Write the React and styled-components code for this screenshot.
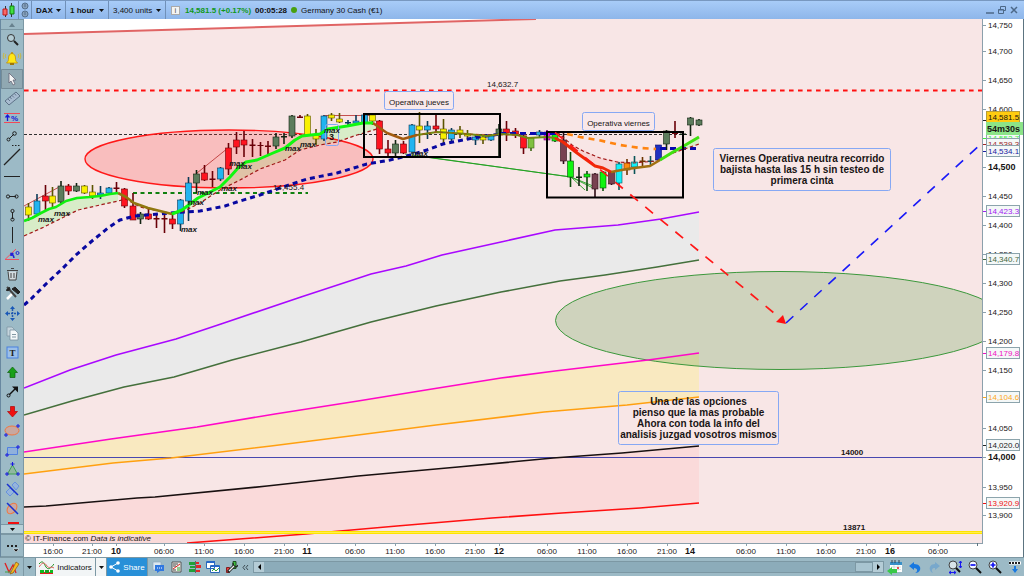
import styled, { createGlobalStyle } from "styled-components"

const GlobalStyle = createGlobalStyle`
* { box-sizing: border-box; }
body {
  margin: 0;
  background: #9dbac5;
  font-family: "Liberation Sans", Arial, sans-serif;
  font-size: 8px;
  color: #111;
}
button, select, input { font: inherit; color: inherit; margin: 0; padding: 0; border: none; background: none; }
svg { display: block; }
`

// x, high, body top, body bottom, low, colour key
const candles = [
    [28.5, 203, 207, 215, 221, "y"], [37, 194, 201, 214, 215, "b"], [45.5, 185, 196, 201, 210, "r"],
    [52.5, 187, 196, 203, 208, "y"], [61, 181, 186, 202, 204, "g"], [68.5, 184, 186, 191, 195, "r"],
    [76.5, 183, 186, 191, 192, "g"], [84.5, 185, 186, 193, 194, "y"], [92.5, 185, 192, 196, 199, "y"],
    [100.5, 186, 193, 195, 199, "b"], [109, 187, 188, 193, 194, "b"], [116.5, 182, 187.5, 189, 192, "r"],
    [124.5, 188, 189, 206, 208, "r"], [133, 193, 206, 220, 220, "r"], [140.5, 212, 214, 219, 224, "g"],
    [148.5, 209, 214, 219, 220, "r"], [156.5, 214, 218, 219.5, 228, "r"], [164.5, 214, 218, 219.5, 233, "r"],
    [172.5, 212, 219, 224, 229, "r"], [180.5, 199, 200, 224, 231, "b"], [188.5, 177, 183, 201, 221, "b"],
    [196.5, 170, 174, 183, 193, "g"], [204.5, 165, 173, 180, 181, "r"], [212.5, 171, 178.5, 180, 187, "r"],
    [220.5, 167, 168, 179, 181, "b"], [228.5, 143, 148, 169, 175, "r"], [236.5, 132, 140, 147, 154, "r"],
    [244, 131, 140, 145, 157, "r"], [252.5, 139, 144.5, 146, 157, "r"], [260.5, 142, 145, 146, 156, "r"],
    [268, 141, 145.5, 147, 156, "r"], [276, 133, 137, 146, 149, "g"], [284, 133, 136, 137.5, 144, "g"],
    [292, 115, 116, 136, 138, "g"], [300, 115, 116.5, 118, 118, "r"], [307.5, 114, 116, 135, 135, "y"],
    [316, 129, 135, 139, 145, "y"], [324, 115, 116, 139, 141, "b"], [331.5, 113, 115, 118, 121, "y"],
    [339.5, 113, 119, 122, 123, "y"], [348, 120, 122, 123.5, 125, "b"], [356, 115, 121, 123, 124, "b"],
    [364.5, 114, 115, 123, 124, "b"], [372.5, 114, 115, 121, 125, "y"], [379.5, 120, 121, 149, 154, "r"],
    [388, 140, 149, 153, 157, "r"], [395.5, 140, 144, 153, 156, "g"], [403.5, 141, 144, 153, 154, "r"],
    [412, 124, 125, 152, 154, "b"], [419.5, 112, 126, 130, 143, "y"], [427.5, 121, 126, 130, 139, "b"],
    [436, 114, 126, 129, 133, "r"], [443.5, 119, 129, 139, 143, "y"], [451.5, 128, 130, 139, 141, "b"],
    [460, 126, 130, 134, 138, "y"], [467.5, 130, 134, 136, 140, "y"], [475.5, 134, 137, 140, 145, "b"],
    [483, 135, 137, 140, 144, "y"], [491, 134, 136, 140, 141, "b"], [499, 124, 129, 134, 158, "g"],
    [506.5, 121, 129, 133, 141, "r"], [515.5, 128, 131, 134, 138, "r"], [523.5, 135, 136, 148, 154, "r"],
    [531, 137, 138, 148, 151, "o"], [539.5, 130, 132, 135, 137, "b"], [547, 130, 132, 140, 141, "p"],
    [555, 131, 133, 141, 142, "l"], [563.5, 133, 140, 161, 164, "m"], [570.5, 152, 161, 177, 187, "l"],
    [579, 167, 176.5, 178, 186, "g"], [587, 171, 174, 177, 191, "l"], [595, 173, 174, 189, 197, "m"],
    [603, 171, 172, 188, 191, "l"], [611.5, 171, 172, 184, 185, "m"], [619, 162, 164, 183, 190, "c"],
    [627, 159, 163, 170, 175, "a"], [634.5, 156, 162, 167, 174, "c"], [642.5, 157, 160.5, 162, 166, "a"],
    [650.5, 156, 160.5, 162, 165, "c"], [658.5, 145, 145, 160, 160, "n"], [666.5, 130, 131, 144, 150, "g"],
    [675, 121, 132.5, 134, 138, "r"], [683, 131, 133.5, 135, 136, "g"], [690.5, 117, 118, 125, 136, "g"],
    [699, 119, 120, 125, 126, "g"],
]

const candleColors = {
    y: ["#f8f000", "#5c5400"],
    b: ["#22b4f0", "#0a3a58"],
    r: ["#ff1420", "#6a0008"],
    g: ["#5c7c5c", "#122412"],
    o: ["#80c040", "#3c6414"],
    p: ["#e010e0", "#780078"],
    l: ["#10f410", "#0a4c0a"],
    m: ["#784050", "#2c0c14"],
    c: ["#10f0f8", "#0a5458"],
    a: ["#ff8c10", "#6c3400"],
    n: ["#2030c0", "#080870"],
}

const purple = "24,388 70,370 116,355 176,339 221,324 301,297 371,274 406,266 442,255 501,242 555,230 618,225 661,219 699,212"
const darkGreen = "24,415 72,401 124,387 174,377 232,360 301,342 371,322 436,306 501,292 560,281 605,275 657,267 699,260"
const magenta = "24,452 111,439 197,427 275,414 358,401 432,389 501,378 555,371 648,360 699,353"
const orange = "24,474 113,463 171,458 271,446 358,435 436,425 544,412 627,405 699,397"
const black = "24,507 46,506 137,498 155,497 267,486 358,476 458,467 553,458 622,453 699,446"
const red = "187,543 306,534 397,526 492,518 562,513 640,508 699,503"

const maGreen1 = "24,221 32,218 41,213 49,209 56,207 66,201 77,198 90,197 100,196 110,194 118,193"
const maOlive1 = "118,193 126,197 134,203 148,208 160,211 172,214"
const maGreen2 = "172,214 182,210 190,204 198,198 208,193 220,187 230,177 238,168 246,162 257,160 273,153 285,148 295,140 302,136 320,134 328,129 347,126 363,123 373,123"
const maOlive2 = "373,123 387,133 403,139 417,135"
const maOlive3 = "417,135 437,132 453,133 467,134 487,136 500,134 517,135 528,138 547,137 555,138"
const maRed = "555,138 563,142 577,153 595,166 603,168 611,172"
const maOlive4 = "611,172 627,169 650,166 660,160"
const maGreen3 = "660,160 673,152 682,147 699,137"

const band1 = "24,236 44,227 60,219 78,210 100,205 118,201"
const band2 = "172,214 182,212 200,203 220,190 240,180 260,169 285,160 300,150 320,145 337,142 357,135 377,129"

const reverse = (points) => points.split(" ").reverse().join(" ")

const highs = [
    [38, 222], [54, 216], [181, 232], [188, 205], [197, 195], [221, 191], [229, 166],
    [236, 169], [285, 151], [300, 147], [324, 133], [412, 156],
]

const prices = [
    [25, "14,750"], [51, "14,700"], [80, "14,650"], [109, "14,600"], [167, "14,500", true],
    [196, "14,450"], [225, "14,400"], [254, "14,350"], [283, "14,300"], [312, "14,250"],
    [341, "14,200"], [370, "14,150"], [428, "14,050"], [457, "14,000", true], [487, "13,950"], [515, "13,900"],
]

const tags = [
    [138, "14,552.7", "#3cf03c"], [144, "14,539.3", "#a02828"], [151, "14,534.1", "#2020a0"],
    [211, "14,423.3", "#a020f0"], [259, "14,340.7", "#44683c"], [353, "14,179.8", "#f010c0"],
    [397, "14,104.6", "#ffa818"], [445, "14,020.0", "#222"], [503, "13,920.9", "#f01010"],
]

const times = [
    [53, "16:00"], [92, "21:00"], [116, "10", true], [164, "06:00"], [204, "11:00"], [244, "16:00"],
    [284, "21:00"], [307, "11", true], [355, "06:00"], [395, "11:00"], [435, "16:00"], [475, "21:00"],
    [499, "12", true], [547, "06:00"], [587, "11:00"], [627, "16:00"], [667, "21:00"], [690, "14", true],
    [746, "06:00"], [786, "11:00"], [826, "16:00"], [866, "21:00"], [890, "16", true], [938, "06:00"],
]

const Note = ({ x, y, width, height, lines, big }) => (
    <g>
        <rect x={x} y={y} width={width} height={height} rx="2" fill={big ? "none" : "#f8e8ea"} stroke="#86a8f4" />
        <ChartText $bold={big} $size={big ? 10 : 8} textAnchor="middle">
            {lines.map((line, i) => (
                <tspan key={line} x={x + width / 2} y={y + 13 + i * 11}>{line}</tspan>
            ))}
        </ChartText>
    </g>
)

const Candle = ({ data }) => {
    const [x, high, top, bottom, low, key] = data
    const [fill, edge] = candleColors[key]
    const thin = bottom - top < 2
    return (
        <g>
            <line x1={x} x2={x} y1={high} y2={low} stroke={edge} strokeWidth="1.6" />
            <rect x={x - 3} y={top} width="6" height={bottom - top} fill={thin ? edge : fill} stroke={edge} strokeWidth={thin ? 0 : 0.6} />
        </g>
    )
}

const PriceChart = () => (
    <ChartSvg viewBox="24 19 1000 538" role="img" aria-label="Germany 30 Cash, 1 hour">
        <defs>
            <clipPath id="plot"><rect x="24" y="19" width="959" height="524" /></clipPath>
        </defs>
        <rect x="24" y="19" width="1000" height="538" fill="#fff" />
        <g clipPath="url(#plot)" fill="none">
            <polygon points="24,34 536,19 983,19 983,543 24,543" fill="#f8e6e6" />
            <line x1="24" y1="34" x2="536" y2="19" stroke="#e06464" strokeWidth="2" />

            <polygon points={`${purple} ${reverse(darkGreen)}`} fill="#eaeaea" />
            <polygon points={`${magenta} ${reverse(orange)}`} fill="#f9e9c0" />
            <polygon points={`${black} ${reverse(red)} 24,543`} fill="#fadada" />
            <ellipse cx="780" cy="320.5" rx="224.5" ry="49" fill="rgba(80,150,60,.24)" stroke="#3c983c" />

            <line x1="24" x2="983" y1="457.5" y2="457.5" stroke="#4848b0" />
            <polyline points={purple} stroke="#a808ff" strokeWidth="1.6" />
            <polyline points={darkGreen} stroke="#44703c" strokeWidth="1.6" />
            <polyline points={magenta} stroke="#ff08c8" strokeWidth="1.7" />
            <polyline points={orange} stroke="#ffa010" strokeWidth="1.6" />
            <polyline points={black} stroke="#181010" strokeWidth="1.7" />
            <polyline points={red} stroke="#ff1010" strokeWidth="1.6" />
            <line x1="24" x2="983" y1="532.5" y2="532.5" stroke="#ffe400" strokeWidth="3" />
            <line x1="24" x2="983" y1="532.5" y2="532.5" stroke="#ffee50" />

            <line x1="24" x2="983" y1="90.5" y2="90.5" stroke="#ff1010" strokeWidth="2" strokeDasharray="4.6 4.4" />
            <line x1="24" x2="688" y1="134.5" y2="134.5" stroke="#303030" strokeDasharray="3 2" />
            <line x1="133" x2="308" y1="193" y2="193" stroke="#108010" strokeWidth="2" strokeDasharray="4 3.5" />

            <polygon points={`${maGreen1} ${reverse(band1)}`} fill="#d8ecc8" />
            <polygon points={`${maGreen2} ${reverse(band2)}`} fill="#d8ecc8" />
            <polygon points="555,132 572,145 600,158 633,163 611,172 595,166 577,153" fill="#f8d4d4" />
            <polygon points="660,160 673,152 699,137 699,144 680,151" fill="#d8ecc8" />
            <ellipse cx="229" cy="159" rx="144" ry="29" fill="rgba(255,50,50,.22)" stroke="#ff1818" strokeWidth="1.4" />

            <path d="M24 206 61 186M197 173l31-25M325 115.5h48" stroke="#b82828" strokeWidth=".8" />
            <path d="M405 154 571 177 595 189M425 157l146 20 14 13M571 177l22 9" stroke="#20a020" strokeWidth=".9" />

            {candles.map((candle) => <Candle key={candle[0]} data={candle} />)}

            <polyline points="24,305 31,299 47,283 62,269 77,254 92,241 108,228 120,220 135,216 170,213 200,211 225,206 240,201 260,195 283,187 307,179 337,173 367,164 390,160 407,156 427,150 443,144 473,138 500,134" stroke="#0808a0" strokeWidth="3" strokeDasharray="5 4" />
            <path d="M500 133.5h56M660 148.5h39" stroke="#0808b0" strokeWidth="3" strokeDasharray="6 4" />
            <polyline points="567,134 580,137 598,140 620,145 640,148 656,149" stroke="#ff8410" strokeWidth="2.6" strokeDasharray="6 5" />

            <g stroke="#a01818" strokeWidth="1.2" strokeDasharray="3.5 2.5">
                <polyline points={`${band1} 126,199 140,207 172,214 ${band2}`} />
                <polyline points="557,132 572,145 583,151 600,158 617,162 633,163 657,161 673,153 699,144" />
            </g>

            <g strokeWidth="2.6" strokeLinejoin="round">
                <polyline points={maOlive1} stroke="#907810" />
                <polyline points={maOlive2} stroke="#a06010" />
                <polyline points={maOlive3} stroke="#708c10" strokeWidth="2" />
                <polyline points={maOlive4} stroke="#a07010" />
                <polyline points={maRed} stroke="#f02808" strokeWidth="3" />
                <polyline points={maGreen1} stroke="#10f010" />
                <polyline points={maGreen2} stroke="#10f810" strokeWidth="3" />
                <polyline points={maGreen3} stroke="#40e010" strokeWidth="3" />
            </g>
            <path d="M373 123l14 10 16 6 14-4 20-3 30 2 33 1 28 0" stroke="#b04010" strokeWidth=".8" strokeDasharray="3 3" />

            <rect x="364" y="114" width="136" height="43" stroke="#000" strokeWidth="2" />
            <rect x="547" y="132" width="136" height="65.5" stroke="#000" strokeWidth="2" />
            <rect x="325.5" y="124.5" width="13" height="21" rx="2" stroke="#86a8f4" />

            <line x1="555" y1="132.5" x2="780" y2="318" stroke="#ff1818" strokeWidth="1.7" strokeDasharray="10 9.5" />
            <polygon points="783,315 776,322 786,324" fill="#ff1010" />
            <line x1="786" y1="323" x2="981" y2="144" stroke="#1818f8" strokeWidth="1.6" strokeDasharray="10 9.2" />
        </g>

        {highs.map(([x, y]) => <MaxText key={`${x}-${y}`} x={x} y={y}>max</MaxText>)}
        <ChartText x="329" y="140" $size={9} $bold>3</ChartText>
        <ChartText x="487" y="87">14,632.7</ChartText>
        <ChartText x="273" y="190">14,455.4</ChartText>
        <ChartText x="841" y="455" $bold>14000</ChartText>
        <ChartText x="843" y="530" $bold>13871</ChartText>
        <ChartText x="25" y="541">© IT-Finance.com <tspan fontStyle="italic">Data is indicative</tspan></ChartText>

        <Note x={384.5} y={91.5} width={69} height={18} lines={["Operativa jueves"]} />
        <Note x={582.5} y={112.5} width={72} height={18} lines={["Operativa viernes"]} />
        <Note big x={713.5} y={148.5} width={177} height={42} lines={["Viernes Operativa neutra recorrido", "bajista hasta las 15 h sin testeo de", "primera cinta"]} />
        <Note big x={618.5} y={391.5} width={160} height={53} lines={["Una de las opciones", "pienso que la mas probable", "Ahora con toda la info del", "analisis juzgad vosotros mismos"]} />

        <path d="M982.5 19v524.5M24 543.5h959" stroke="#8ca0ac" fill="none" />
        {prices.map(([y, label, bold]) => (
            <g key={label}>
                <line x1="983" x2="986" y1={y + 0.5} y2={y + 0.5} stroke="#8ca0ac" />
                <ChartText x="988" y={y + 3} $bold={bold} $size={bold ? 9 : 8}>{label}</ChartText>
            </g>
        ))}
        {tags.map(([y, label, color]) => (
            <g key={label}>
                <line x1="983" x2="986" y1={y + 0.5} y2={y + 0.5} stroke={color} />
                <rect x="986.5" y={y - 5.5} width="33" height="11" fill="#f4f8f8" stroke="#8ca4ac" />
                <ChartText x="988" y={y + 3} $color={color}>{label}</ChartText>
            </g>
        ))}
        <line x1="983" x2="986" y1="120.5" y2="120.5" stroke="#222" />
        <rect x="986.5" y="111.5" width="33" height="11" fill="#ffcc10" stroke="#b89c38" />
        <ChartText x="988" y="120">14,581.5</ChartText>
        <rect x="986" y="122" width="37" height="13" fill="#8ce488" />
        <ChartText x="987" y="132" $bold $size={9}>54m30s</ChartText>

        {times.map(([x, label, bold]) => (
            <g key={x}>
                <line x1={x + 0.5} x2={x + 0.5} y1="543" y2="546" stroke="#8ca0ac" />
                <ChartText x={x} y="554" textAnchor="middle" $bold={bold} $size={bold ? 9 : 8}>{label}</ChartText>
            </g>
        ))}
        <path d="M977.5 543v3M1023.5 19v538" stroke="#5c7480" />
    </ChartSvg>
)

const plus = (x, y) => `M${x - 2} ${y}h4M${x} ${y - 2}v4`

// drawing tools, each on a 22x20 grid
const tools = [
    ["Zoom", <><circle cx="10" cy="8" r="3.5" fill="#b4ccd4" stroke="#333" /><path d="m13 11 4 4" stroke="#222" strokeWidth="2" /></>],
    ["Alerts", <><path d="M5.5 14c2-2 2-3 2-5 0-6 7-6 7 0 0 2 0 3 2 5z" fill="#ffe818" stroke="#c09008" strokeWidth=".8" /><path d="M9 15h4" stroke="#a07808" strokeWidth="2" /><path d="M11 3v2" stroke="#c09008" strokeWidth="1.5" /><path d="M5 5c-1 1-1 3 0 4M17 5c1 1 1 3 0 4M3 4c-1 2-1 4 0 6M19 4c1 2 1 4 0 6" stroke="#d0b830" strokeWidth=".9" /></>],
    ["Pointer", <path d="M8 4v10l2-2 2 4 2-1-2-4h3z" fill="#f4f4f4" stroke="#667" strokeWidth=".8" />],
    ["Ruler", <><path d="m4 13 11-9 4 4-11 9z" fill="#a8bcd0" stroke="#566a80" strokeWidth=".9" /><path d="m7 11 2 2M9 9l1.5 2M11 7.5l2 2M13.5 5.5l1.5 2" stroke="#566a80" strokeWidth=".8" /></>],
    ["Variation", <><path d="M3 5.5h16M3 14.5h16" stroke="#f04858" /><path d="M6.500 13V7.500M4.500 9.500l2-2.500 2 2.500" stroke="#1818d8" strokeWidth="1.300" /><text x="10" y="13" fontSize="8" fontWeight="bold" fill="#1818d8">%</text></>],
    ["Link points", <><path d="m8 12 5-5" stroke="#222" /><circle cx="7.5" cy="12.5" r="1.5" stroke="#222" /><circle cx="13.5" cy="6.5" r="1.8" stroke="#222" /><path d="M11 18.5h8" stroke="#222" strokeDasharray="1.5 1.5" /></>],
    ["Line", <path d="M3 18 19 2" stroke="#222" strokeWidth="1.2" />],
    ["Horizontal line", <path d="M3 10.5h16" stroke="#222" />],
    ["Horizontal segment", <><path d="M8 10.5h7" stroke="#222" /><circle cx="7" cy="10.5" r="1.6" stroke="#222" /><circle cx="15.5" cy="10.5" r="1.6" stroke="#222" /></>],
    ["Vertical segment", <><path d="M11.5 7v7" stroke="#222" /><circle cx="11.5" cy="6" r="1.6" stroke="#222" /><circle cx="11.5" cy="14.5" r="1.6" stroke="#222" /></>],
    ["Vertical line", <path d="M11.5 2v16" stroke="#222" />],
    ["Angle", <><path d="M4 15.5 15 5M4 15.5h14" stroke="#f05060" /><path d="M10 10q3 1 3 4M10 12V9.5h2.5" stroke="#2020d8" strokeWidth="1.5" /><circle cx="16.5" cy="9" r="1.5" stroke="#2020d8" /></>],
    ["Delete", <><path d="M7 7.5 8 16h7l1-8.5" fill="#d4dce0" stroke="#444" /><path d="M6 6.5h11M10 4.5h3M10 9v5M13 9v5" stroke="#444" /></>],
    ["Settings", <><path d="m6 16 6-6" stroke="#fff" strokeWidth="2.5" /><path d="m6 4 9 10" stroke="#444" strokeWidth="2" /><path d="M5 7c3 2 5-1 3-3M11 6l3-2 5 5-2 2z" stroke="#222" fill="#222" /></>],
    ["Move", <><path d="M11.5 6v9M7 10.5h9" stroke="#2058b0" strokeWidth="1.5" strokeDasharray="2 1" /><path d="m11.5 3 2.5 3h-5zM11.5 18l2.500-3h-5zM4 10.5 7 8v5zM19 10.5 16 8v5z" fill="#1858b8" /></>],
    ["Copy", <><path d="M6 4h5l2 2v7H6z" fill="#c4d4dc" stroke="#8298a4" strokeWidth=".8" /><path d="M9 7h5l3 3v7H9z" fill="#f4f8fa" stroke="#7890a0" strokeWidth=".8" /><path d="M11 11.5h4M11 14h4" stroke="#8298a4" /></>],
    ["Text", <><rect x="6" y="5" width="11" height="11" fill="#9cc0e8" stroke="#4880e0" /><text x="11.5" y="14" fontFamily="Liberation Serif, serif" textAnchor="middle" fontSize="9" fontWeight="bold" fill="#222">T</text></>],
    ["Up arrow", <path d="m11.5 5 5 5.5h-2.5v5H9v-5H6.5z" fill="#18a018" stroke="#106010" strokeWidth=".7" />],
    ["Arrow", <><path d="m8 14 6-6" stroke="#111" strokeWidth="1.5" /><path d="M11 5.5h6v6z" fill="#111" /><circle cx="7.5" cy="14.5" r="1.5" fill="#9cb8c4" stroke="#111" /></>],
    ["Down arrow", <path d="m11.5 16 5-5.5h-3v-5H9.5v5h-3z" fill="#f01010" stroke="#b00808" strokeWidth=".7" />],
    ["Ellipse", <><ellipse cx="11" cy="10.5" rx="7" ry="4.5" fill="#c8a8a0" stroke="#f07840" /><path d={`${plus(5, 15)}${plus(17, 6)}`} stroke="#1818e0" /></>],
    ["Rectangle", <><path d="M6.5 7.5h10v7h-10z" fill="#90b0dc" stroke="#5080e0" /><path d={`${plus(6, 15)}${plus(17, 7)}`} stroke="#1818e0" /></>],
    ["Triangle", <><path d="m11.5 6 5 9h-10z" fill="#90b8a0" stroke="#40a050" /><path d={`${plus(11.5, 5)}${plus(6, 15)}${plus(17, 15)}`} stroke="#1818e0" /></>],
    ["Crossed rectangle", <><path d="m5 13 4-4 4 4-4 4zM11 6l3-3 4 4-3 4z" fill="#94b4dc" stroke="#5c88e0" strokeWidth=".8" /><path d="m6 5 11 11" stroke="#1830d0" strokeWidth="1.5" /></>],
    ["Crossed ellipse", <><ellipse cx="11" cy="10.5" rx="6" ry="4" transform="rotate(-50 11 10.5)" fill="#c8a8a4" stroke="#f07840" /><path d="m6 5 11 11" stroke="#1830d0" strokeWidth="1.5" /></>],
]

const Caret = () => <svg width="5" height="3" viewBox="0 0 5 3"><path d="M0 0h5L2.5 3z" fill="currentColor" /></svg>

const Picker = ({ label, value, bold, width }) => (
    <PickerBox $width={width}>
        <PickerSelect aria-label={label} defaultValue={value} $bold={bold}>
            <option>{value}</option>
        </PickerSelect>
        <Caret />
    </PickerBox>
)

const Header = () => (
    <TopBar>
        <TopCell $width={19}>
            <svg width="16" height="16" viewBox="0 0 16 16" fill="none">
                <path d="M4.5 4v11M10.5 1v14" stroke="#333" /><path d="M2 7h4v6H2z" fill="#f86868" stroke="#c01818" />
                <path d="M9 4h4v8H9z" fill="#40e040" stroke="#108010" />
            </svg>
        </TopCell>
        <TopCell $width={13}>
            <svg width="10" height="16" viewBox="0 0 10 16" fill="none" stroke="#56708c">
                <circle cx="5" cy="4" r="3" fill="#86a0bc" /><path d="M5 2v3" /><circle cx="5" cy="12" r="3" fill="#86a0bc" /><path d="M5 10v3" />
            </svg>
        </TopCell>
        <Picker label="Instrument" value="DAX" bold width={34} />
        <Picker label="Timeframe" value="1 hour" bold width={43} />
        <Picker label="Units" value="3,400 units" width={57} />
        <Quote>
            <InfoButton aria-label="Information">i</InfoButton>
            <Change>14,581.5 (+0.17%)</Change>
            <b>00:05:28</b>
            <Dot />
            <span>Germany 30 Cash (€1)</span>
        </Quote>
        <WindowButtons>
            <IconButton aria-label="Minimize"><svg width="8" height="10" viewBox="0 0 8 10"><path d="M0 8h8" stroke="#4c6888" strokeWidth="1.5" /></svg></IconButton>
            <IconButton aria-label="Restore"><svg width="8" height="10" viewBox="0 0 8 10" fill="none" stroke="#4c6888"><path d="M2.5 4V1.5h5v4H6M.5 4.5h5v4h-5zM.5 5h5" /></svg></IconButton>
            <IconButton aria-label="Close"><svg width="8" height="10" viewBox="0 0 8 10"><path d="m1 2 6 6M7 2 1 8" stroke="#4c6888" strokeWidth="1.5" /></svg></IconButton>
        </WindowButtons>
    </TopBar>
)

const ToolSidebar = () => (
    <Sidebar>
        <ScrollTools aria-label="Scroll up" $height={11} $muted><svg width="6" height="4" viewBox="0 0 6 4"><path d="M0 4h6L3 0z" fill="#68828e" /></svg></ScrollTools>
        <ToolList>
            {tools.map(([name, drawing]) => (
                <ToolButton key={name} aria-label={name} $active={name === "Pointer"}>
                    <svg width="22" height="20" viewBox="0 0 22 20" fill="none">{drawing}</svg>
                </ToolButton>
            ))}
        </ToolList>
        <ToolButtonCut aria-label="Red line"><svg width="22" height="6" viewBox="0 0 22 6"><path d="M7 5h11" stroke="#f01010" strokeWidth="2" /></svg></ToolButtonCut>
        <ScrollTools aria-label="Scroll down" $height={10}><Caret /></ScrollTools>
        <ScrollTools aria-label="More tools" $height={23} $muted>
            <svg width="22" height="20" viewBox="0 0 22 20"><path d="M6 9h2v2H6zM10 9h2v2h-2zM14 9h2v2h-2z" fill="#222" /><path d="M12 13h6l-3 3z" fill="#111" stroke="#fff" strokeWidth=".5" /></svg>
        </ScrollTools>
    </Sidebar>
)

const Footer = () => (
    <BottomBar>
        <FooterButton aria-label="Draw" $width={24}>
            <svg width="16" height="15" viewBox="0 0 16 15" fill="none"><path d="m1 3 4 9 4-7 3 8" stroke="#e02020" strokeWidth="1.3" /><path d="M1 12h9" stroke="#40a040" /><path d="m7 12 5-10 3 2-6 9-3 1z" fill="#f8b820" stroke="#885c10" strokeWidth=".7" /></svg>
        </FooterButton>
        <FooterButton aria-label="Draw options" $width={12}><Caret /></FooterButton>
        <FooterButton $width={60} $kind="light">
            <svg width="15" height="14" viewBox="0 0 15 14" fill="none"><path d="M0 4c4-5 5 0 7 3s4 2 8-3" stroke="#209020" /><path d="M0 7c4-6 6-4 8-1s4 0 7 2" stroke="#e06060" /><path d="M1 10h4v3H1zM11 10h3v3h-3z" fill="#10b820" /><path d="M5 12h6v1H5zM1 13h13v1H1z" fill="#e02020" /><path d="M6 10h4v3H6z" fill="#18a020" /></svg>
            Indicators
        </FooterButton>
        <FooterButton aria-label="Indicator options" $width={11} $kind="light"><Caret /></FooterButton>
        <FooterButton $width={41} $kind="blue">
            <svg width="11" height="12" viewBox="0 0 11 12" fill="#fff"><path d="m9 2-7 4 7 4" stroke="#fff" fill="none" /><circle cx="9" cy="2" r="1.8" /><circle cx="2" cy="6" r="1.8" /><circle cx="9" cy="10" r="1.8" /></svg>
            Share
        </FooterButton>
        <IconGroup>
            <IconButton aria-label="Chat"><svg width="13" height="14" viewBox="0 0 13 14"><path d="M1 2h8v8H1z" fill="#dce8f0" stroke="#90a8bc" strokeWidth=".7" /><path d="M3 5h9v6H8l-3 2v-2H3z" fill="#3078e0" /><path d="M5 8h1M7 8h1M9 8h1" stroke="#fff" /></svg></IconButton>
            <IconButton aria-label="Report"><svg width="13" height="14" viewBox="0 0 13 14" fill="none"><path d="M2 2h9v10H2z" fill="#f4f4f0" stroke="#555" /><path d="M3 4h5M3 6h3M3 10h3" stroke="#444" /><path d="m3 9 7-5" stroke="#e02020" /><path d="M7 8h3M7 10h3" stroke="#30a030" /></svg></IconButton>
            <IconButton aria-label="Order book"><svg width="13" height="14" viewBox="0 0 13 14"><path d="M1 2h6v3H1zM2 6h5v2H2zM1 9h6v3H1z" fill="#20a038" /><path d="M8 2h3v2H8zM8 5h5v3H8zM8 10h4v2H8z" fill="#e02828" /><path d="M7.5 1v12" stroke="#444" strokeWidth=".7" /></svg></IconButton>
            <IconButton aria-label="Windows"><svg width="14" height="14" viewBox="0 0 14 14"><path d="M.5 1.5h8v7h-8zM4.5 5.5h9v7h-9z" fill="#fff" stroke="#2868b8" /><path d="M1 2h8M5 6h8" stroke="#2868c8" strokeWidth="2" /><path d="m6 11 2-2 2 2 3-3" fill="none" stroke="#30a030" /></svg></IconButton>
            <IconButton aria-label="Tools"><svg width="13" height="14" viewBox="0 0 13 14" fill="none"><path d="M1.500 7.500h3v5h-3z" fill="#e84040" stroke="#802020" /><path d="M8 1.500h3v7H8z" fill="#40c040" stroke="#205020" /><path d="m3 12 6-6" stroke="#222" strokeWidth="3" /><path d="M8 3c0 4 4 5 5 2" stroke="#222" strokeWidth="1.2" /><path d="m4 11 5-5" stroke="#f0f0f0" strokeWidth="1.2" /></svg></IconButton>
        </IconGroup>
        <IconButton aria-label="Collapse"><svg width="7" height="7" viewBox="0 0 7 7" fill="none" stroke="#3c4c54"><path d="m3 1-2 2.5 2 2.5M6 1 4 3.5 6 6" /></svg></IconButton>
        <ScrollArea>
            <ScrollArrow aria-label="Scroll left"><svg width="3" height="6" viewBox="0 0 3 6"><path d="M3 0v6L0 3z" /></svg></ScrollArrow>
            <ScrollRange type="range" aria-label="Chart position" defaultValue="100" />
            <ScrollArrow aria-label="Scroll right"><svg width="3" height="6" viewBox="0 0 3 6"><path d="M0 0v6l3-3z" /></svg></ScrollArrow>
        </ScrollArea>
        <IconGroup $wide>
            <IconButton aria-label="Go to date"><svg width="15" height="15" viewBox="0 0 15 15"><path d="M3 2h12v10H3z" fill="#fff" /><path d="M3 2h12v3H3z" fill="#3890c8" /><path d="M5 0v3M8 0v3M12 0v3" stroke="#345" /><path d="M4 7h10M4 9.5h10M7 5v6M11 5v6" stroke="#bcc" strokeWidth=".6" /><path d="M10 7h2v2h-2z" fill="#e85050" /><path d="m0 11 5-4v2h5v4H5v2z" fill="#38c848" /></svg></IconButton>
            <IconButton aria-label="Undo"><svg width="14" height="14" viewBox="0 0 14 14"><path d="m1 6 5-4v2c5 0 7 3 6 6-1 2-2 3-5 3 3-1 3-5-1-5v2z" fill="#1878e0" /></svg></IconButton>
            <IconButton aria-label="Redo"><svg width="14" height="14" viewBox="0 0 14 14"><path d="M12 6 7 2v2C3 4 1 7 2 10c1 2 1 2 3 3-2-3-1-5 2-5v2z" fill="#78a8cc" /></svg></IconButton>
            <IconButton aria-label="Zoom to fit"><svg width="14" height="15" viewBox="0 0 14 15" fill="none"><circle cx="5" cy="5" r="4" fill="#d8e4e8" stroke="#444" /><path d="m8 8 4 4" stroke="#111" strokeWidth="2" /><path d="M12.5 1v7M11 3l1.5-2L14 3M11 6l1.5 2L14 6M1 12.5h7M3 11l-2 1.5L3 14M6 11l2 1.5L6 14" stroke="#1818f0" /></svg></IconButton>
            <IconButton aria-label="Zoom out"><svg width="14" height="15" viewBox="0 0 14 15" fill="none"><circle cx="5" cy="5" r="4" fill="#f0f4ff" stroke="#444" /><path d="m8 8 5 5" stroke="#111" strokeWidth="2" /><path d="M2.5 5h5" stroke="#1010f0" strokeWidth="1.7" /></svg></IconButton>
            <IconButton aria-label="Zoom in"><svg width="14" height="15" viewBox="0 0 14 15" fill="none"><circle cx="5" cy="5" r="4" fill="#f0f4ff" stroke="#444" /><path d="m8 8 5 5" stroke="#111" strokeWidth="2" /><path d="M2.5 5h5M5 2.5v5" stroke="#1010f0" strokeWidth="1.7" /></svg></IconButton>
            <IconButton aria-label="Hide axis"><svg width="14" height="14" viewBox="0 0 14 14"><path d="M1 3h12" stroke="#fff" strokeWidth="3" /><path d="M1 3h12" stroke="#222" strokeWidth="2" strokeDasharray="2 1" /><path d="M6 6h2v3h2l-3 4-3-4h2z" fill="#1878e0" /></svg></IconButton>
        </IconGroup>
    </BottomBar>
)

export default function App() {
    return (
        <Page>
            <GlobalStyle />
            <Header />
            <Main>
                <ToolSidebar />
                <PriceChart />
            </Main>
            <Footer />
        </Page>
    )
}

const Page = styled.div`
display: flex;
flex-direction: column;
min-height: 100vh;
`
const TopBar = styled.header`
display: flex;
height: 19px;
border-top: 1px solid #7898c0;
background: linear-gradient(#a8ccf8, #8eb6ea);
`
const TopCell = styled.div`
display: flex;
align-items: center;
justify-content: center;
width: ${(props) => props.$width}px;
border-right: 1px solid #7090b8;
`
const PickerBox = styled.div`
display: flex;
align-items: center;
justify-content: space-between;
width: ${(props) => props.$width}px;
padding: 0 4px;
border-right: 1px solid #7090b8;
`
const PickerSelect = styled.select`
appearance: none;
flex: 1;
min-width: 0;
height: 18px;
outline: none;
font-weight: ${(props) => props.$bold ? "bold" : "normal"};
`
const Quote = styled.div`
display: flex;
align-items: center;
gap: 4px;
padding-left: 5px;
flex: 1;
white-space: nowrap;
`
const InfoButton = styled.button`
width: 9px;
height: 9px;
margin-right: 1px;
line-height: 8px;
background: #f4f4f4;
border: 1px solid #aaa;
color: #555;
`
const Change = styled.b`
color: #109818;
`
const Dot = styled.span`
width: 6px;
height: 6px;
border-radius: 50%;
background: #48a010;
`
const WindowButtons = styled.div`
display: flex;
align-items: center;
gap: 4px;
padding-right: 6px;
`
const Main = styled.main`
display: flex;
flex: 1;
`
const Sidebar = styled.nav`
display: flex;
flex-direction: column;
flex: none;
width: 24px;
background: #9cbac6;
border-left: 1px solid #6888a0;
border-right: 1px solid #7c98a4;
`
const ToolList = styled.div`
display: flex;
flex-direction: column;
flex: 1;
`
const ToolButton = styled.button`
display: flex;
flex: 1 1 0;
min-height: 0;
align-items: center;
justify-content: center;
border-radius: 1px;
background: ${(props) => props.$active ? "#90a8b2" : "none"};
box-shadow: ${(props) => props.$active ? "inset 0 0 0 1px #748c98" : "none"};
`
const ToolButtonCut = styled.button`
height: 6px;
overflow: hidden;
`
const ScrollTools = styled.button`
display: flex;
align-items: center;
justify-content: center;
height: ${(props) => props.$height}px;
border-top: 1px solid #7c98a4;
border-bottom: 1px solid #7c98a4;
background: ${(props) => props.$muted ? "#9cbac6" : "#b8d0d8"};
`
const ChartSvg = styled.svg`
flex: 1;
min-width: 0;
height: auto;
`
const ChartText = styled.text`
font-size: ${(props) => props.$size || 8}px;
font-weight: ${(props) => props.$bold ? "bold" : "normal"};
fill: ${(props) => props.$color || "#181414"};
`
const MaxText = styled.text`
font-size: 8px;
font-weight: bold;
font-style: italic;
fill: #181818;
`
const BottomBar = styled.footer`
display: flex;
align-items: center;
height: 19px;
background: #9cbac6;
border-top: 1px solid #7c98a4;
padding-right: 2px;
`
const footerColors = {
    light: "background: #f2f5f6; color: #111;",
    blue: "background: #2890d8; color: #fff;",
}
const FooterButton = styled.button`
display: flex;
align-items: center;
justify-content: center;
gap: 3px;
width: ${(props) => props.$width}px;
height: 18px;
border-right: 1px solid #7c98a4;
${(props) => footerColors[props.$kind]}
`
const IconButton = styled.button`
display: flex;
align-items: center;
justify-content: center;
`
const IconGroup = styled.div`
display: flex;
align-items: center;
gap: ${(props) => props.$wide ? 6 : 5}px;
padding: 0 ${(props) => props.$wide ? 0 : 4}px;
`
const ScrollArea = styled.div`
display: flex;
flex: 1;
height: 12px;
margin: 0 3px 0 4px;
border: 1px solid #7c98a4;
`
const ScrollArrow = styled.button`
display: flex;
align-items: center;
justify-content: center;
width: 10px;
background: #b4ccd6;
`
const ScrollRange = styled.input`
appearance: none;
flex: 1;
min-width: 0;
height: 10px;
background: #8cacba;
&::-webkit-slider-thumb {
  appearance: none;
  width: 18px;
  height: 10px;
  background: #a8c4d0;
  border: 1px solid #7c98a4;
}
`
